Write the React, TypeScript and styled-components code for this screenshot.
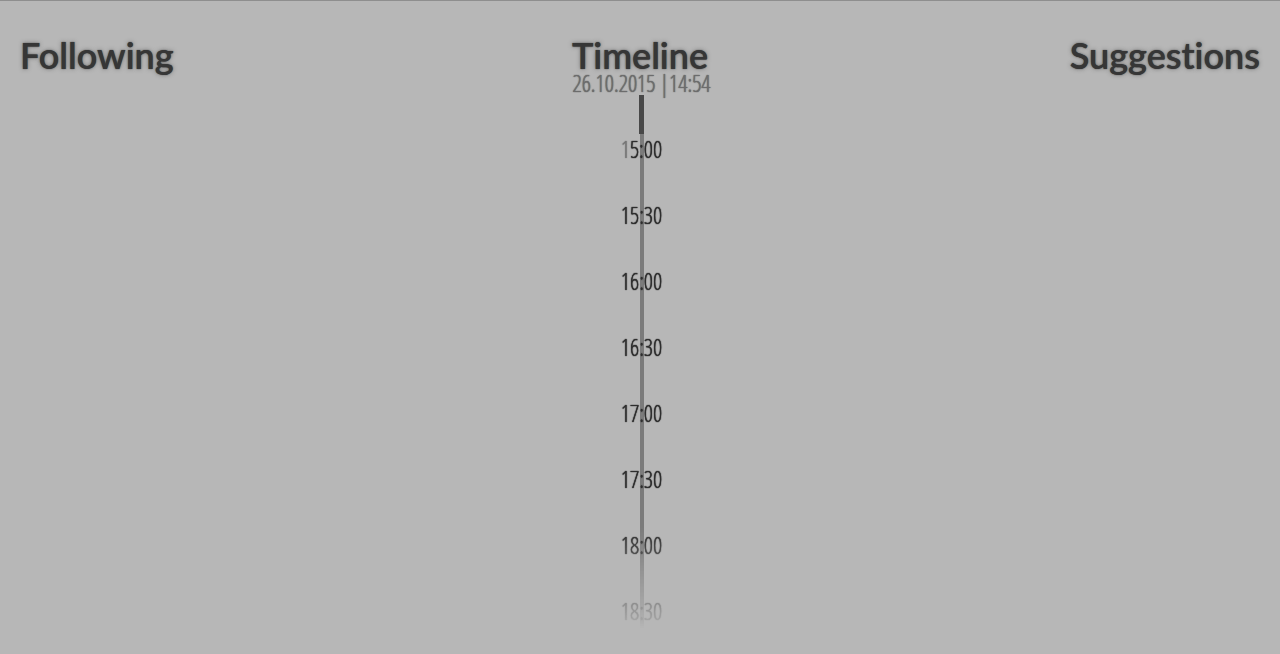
import React from "react";
import styled, { createGlobalStyle } from "styled-components";

const GlobalStyle = createGlobalStyle`
  * { box-sizing: border-box; }
  body {
    margin: 0;
    background: #b7b7b7;
    color: #363636;
    font-family: Lato, "Open Sans", sans-serif;
  }
`;

const Page = styled.div`
  min-height: 100vh;
  border-top: 1px solid #8e8e8e;
  padding: 36px 20px 0;
`;

const Columns = styled.div`
  display: grid;
  grid-template-columns: 1fr auto 1fr;
`;

const Column = styled.section<{ $align: "left" | "center" | "right" }>`
  text-align: ${(p) => p.$align};
`;

const Title = styled.h2`
  margin: 0;
  font-size: 36px;
  line-height: 37px;
  font-weight: 600;
  font-variant-ligatures: none;
  text-shadow: 0 0 1px #363636, 0 0 4px rgba(54, 54, 54, 0.5);
`;

const Clock = styled.div`
  padding-left: 3px;
  font-family: "Open Sans Condensed Light", "Open Sans Condensed", "Open Sans", sans-serif;
  font-size: 23px;
  font-weight: 300;
  text-shadow: 0 0 1px currentColor, 0 0 1px currentColor;
`;

const Now = styled.time`
  display: block;
  padding-bottom: 2px;
  line-height: 19px;
  color: #6c6c6c;
  white-space: pre;
`;

const Elapsed = styled.div`
  width: 5px;
  height: 39px;
  margin: 0 auto;
  background: #484848;
`;

const Hours = styled.ol`
  margin: 0;
  padding: 0 0 2px;
  list-style: none;
  display: grid;
  gap: 36px;
  background: linear-gradient(#7b7b7b, #7b7b7b) center top / 4px 100% no-repeat;
  mask-image: linear-gradient(#000 0 394px, rgba(0, 0, 0, 0.12) 488px, transparent 494px);
`;

const Hour = styled.li`
  line-height: 30px;
  color: #2e2e2e;
`;

const Passed = styled.span`
  color: #777777;
`;

const hours = ["15:00", "15:30", "16:00", "16:30", "17:00", "17:30", "18:00", "18:30"];

export default function App() {
  return (
    <>
      <GlobalStyle />
      <Page>
        <Columns>
          <Column $align="left">
            <Title>Following</Title>
          </Column>
          <Column $align="center">
            <Title>Timeline</Title>
            <Clock>
              <Now dateTime="2015-10-26T14:54">26.10.2015 |14:54</Now>
              <Elapsed />
              <Hours>
                {hours.map((hour, i) => (
                  <Hour key={hour}>
                    {i === 0 ? (
                      <>
                        <Passed>{hour[0]}</Passed>
                        {hour.slice(1)}
                      </>
                    ) : (
                      hour
                    )}
                  </Hour>
                ))}
              </Hours>
            </Clock>
          </Column>
          <Column $align="right">
            <Title>Suggestions</Title>
          </Column>
        </Columns>
      </Page>
    </>
  );
}
